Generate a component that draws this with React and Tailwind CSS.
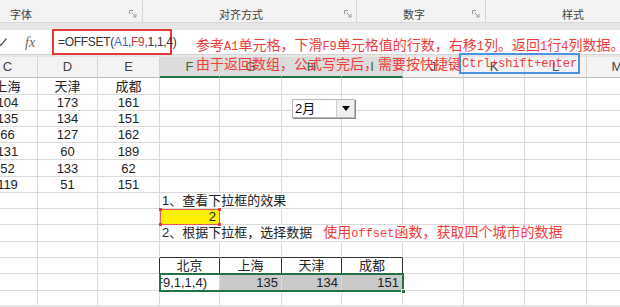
import React from "react";
import { twMerge } from "tailwind-merge";

const W = ["w-[60px]", "w-[60px]", "w-[62px]", "w-[60px]", "w-[62px]", "w-[60px]", "w-[61px]", "w-[61px]", "w-[61px]", "w-[62px]", "w-[61px]"];
const LETTERS = ["C", "D", "E", "F", "G", "H", "I", "J", "K", "L", "M"];
const SEL = [3, 4, 5, 6];
const ALL = [0, 1, 2, 3, 4, 5, 6, 7, 8, 9, 10];

function Cell({ i, className, children }) {
  return (
    <div
      className={twMerge(
        "shrink-0 flex items-end justify-center leading-[14px] border-r border-b border-[#dadada]",
        W[i],
        className
      )}
    >
      {children}
    </div>
  );
}

function M({ children }) {
  return <span className="font-['Liberation_Mono',monospace] text-[12px]">{children}</span>;
}

function Launcher() {
  return (
    <svg width="8" height="8" viewBox="0 0 8 8" className="shrink-0">
      <path d="M0.5 4V0.5H4" stroke="#9a9a9a" strokeWidth="1" fill="none" />
      <path d="M2.5 2.5L7 7M7 4v3H4" stroke="#9a9a9a" strokeWidth="1" fill="none" />
    </svg>
  );
}

const DATA = [
  ["上海", "天津", "成都"],
  ["104", "173", "161"],
  ["135", "134", "151"],
  ["66", "127", "162"],
  ["131", "60", "189"],
  ["52", "133", "62"],
  ["119", "51", "151"],
];
const DATA_H = ["h-[17px]", "h-[16px]", "h-[16px]", "h-[16px]", "h-[17px]", "h-[17px]", "h-[16px]"];

export default function App() {
  return (
    <div className="w-[620px] h-[307px] overflow-hidden relative bg-white text-[13px] text-[#222] font-['Liberation_Sans','Noto_Sans_CJK_SC',sans-serif]">
      {/* Ribbon group labels */}
      <div className="flex h-[22px] bg-[#f3f3f3] text-[11px] leading-[14px] text-[#444] font-['Noto_Sans_CJK_SC',sans-serif]">
        <div className="w-[143px] shrink-0 flex items-end pb-[1px] pl-[10px] pr-[5px] border-r border-[#d6d6d6]">
          <span className="flex-1">字体</span>
          <span className="mb-[3px]"><Launcher /></span>
        </div>
        <div className="w-[214px] shrink-0 flex items-end pb-[1px] pl-[76px] pr-[4px] border-r border-[#d6d6d6]">
          <span className="flex-1">对齐方式</span>
          <span className="mb-[3px]"><Launcher /></span>
        </div>
        <div className="w-[129px] shrink-0 flex items-end pb-[1px] pl-[46px] pr-[5px] border-r border-[#d6d6d6]">
          <span className="flex-1">数字</span>
          <span className="mb-[3px]"><Launcher /></span>
        </div>
        <div className="flex-1 flex items-end pb-[1px] pl-[76px]">
          <span>样式</span>
        </div>
      </div>
      <div className="h-[8px] bg-[#e6e6e6] border-t border-[#d9d9d9]" />

      {/* Formula bar */}
      <div className="flex h-[25px] bg-white border-b border-[#d4d4d4] items-center">
        <div className="w-[50px] shrink-0 flex items-center h-full">
          <svg width="10" height="10" viewBox="0 0 10 10" className="-ml-[3px]">
            <path d="M1 5.5L3.8 8.3L9.5 1.5" stroke="#555" strokeWidth="1.3" fill="none" />
          </svg>
          <span className="ml-[18px] font-['Liberation_Serif',serif] italic text-[14px] text-[#666]">fx</span>
        </div>
        <div className="ml-[2px] w-[120px] h-[26px] shrink-0 border-2 border-[#e5393b] flex items-center pl-[4px] text-[12px] tracking-[-0.3px] text-[#333]">
          <span>
            =OFFSET(<span className="text-[#3b6fc9]">A1</span>,<span className="text-[#d0393b]">F9</span>,1,1,4)
          </span>
          <span className="w-px h-[15px] bg-black ml-[1px]" />
        </div>
      </div>
      <div className="h-[2px] bg-[#e6e6e6]" />

      {/* Grid */}
      <div className="-ml-[22px]">
        <div className="flex h-[21px]">
          {LETTERS.map((l, i) => (
            <div
              key={l}
              className={twMerge(
                "shrink-0 flex items-end justify-center pb-[1px] border-r border-b border-r-[#d4d4d4] border-b-[#bdbdbd] bg-[#f3f3f3] text-[#444] text-[13px]",
                W[i],
                SEL.includes(i) && "bg-[#dcdcdc] text-[#2e6a44] border-b-2 border-b-[#217346] pb-0"
              )}
            >
              {l}
            </div>
          ))}
        </div>

        {DATA.map((row, r) => (
          <div key={r} className={`flex ${DATA_H[r]}`}>
            {ALL.map((i) => (
              <Cell key={i} i={i}>
                {row[i] ?? ""}
              </Cell>
            ))}
          </div>
        ))}

        {/* 1、查看下拉框的效果 */}
        <div className="flex h-[16px]">
          {ALL.map((i) =>
            i === 3 ? (
              <Cell key={i} i={i} className="justify-start pl-[2px] border-r-transparent">
                <span className="whitespace-nowrap">1、查看下拉框的效果</span>
              </Cell>
            ) : (
              <Cell key={i} i={i} className={i === 4 ? "border-r-transparent" : ""} />
            )
          )}
        </div>

        {/* yellow cell */}
        <div className="flex h-[16px]">
          {ALL.map((i) =>
            i === 3 ? (
              <Cell key={i} i={i} className="relative bg-[#ffef00] justify-end pr-[3px] border border-[#e05a5a] border-t-[#e05a5a]">
                <span>2</span>
                <span className="absolute -left-[2px] -top-[2px] w-[3px] h-[3px] bg-[#e03a3a]" />
                <span className="absolute -right-[2px] -top-[2px] w-[3px] h-[3px] bg-[#e03a3a]" />
                <span className="absolute -left-[2px] -bottom-[2px] w-[3px] h-[3px] bg-[#e03a3a]" />
                <span className="absolute -right-[2px] -bottom-[2px] w-[3px] h-[3px] bg-[#e03a3a]" />
              </Cell>
            ) : (
              <Cell key={i} i={i} />
            )
          )}
        </div>

        {/* 2、根据下拉框 */}
        <div className="flex h-[17px]">
          {ALL.map((i) =>
            i === 3 ? (
              <Cell key={i} i={i} className="justify-start pl-[2px] border-r-transparent">
                <span className="whitespace-nowrap">
                  2、根据下拉框，选择数据
                  <span className="ml-[11px] text-[14px] text-[#f23b3b] font-['Noto_Sans_CJK_SC',sans-serif]">
                    使用<M>offset</M>函数，获取四个城市的数据
                  </span>
                </span>
              </Cell>
            ) : (
              <Cell key={i} i={i} className={i > 3 && i < 9 ? "border-r-transparent" : ""} />
            )
          )}
        </div>

        {/* empty row above table */}
        <div className="flex h-[16px]">
          {ALL.map((i) => (
            <Cell key={i} i={i} className={SEL.includes(i) ? "border-b-[#333]" : ""} />
          ))}
        </div>

        {/* table header */}
        <div className="flex h-[16px]">
          {ALL.map((i) => (
            <Cell
              key={i}
              i={i}
              className={i === 2 ? "border-r-[#333]" : SEL.includes(i) ? "border-r-[#333] border-b-[#333]" : ""}
            >
              {["", "", "", "北京", "上海", "天津", "成都"][i] ?? ""}
            </Cell>
          ))}
        </div>

        {/* result row */}
        <div className="flex h-[17px]">
          {[0, 1, 2].map((i) => (
            <Cell key={i} i={i} />
          ))}
          <div className="flex relative outline-2 outline-[#217346] -outline-offset-1">
            <Cell i={3} className="justify-start overflow-hidden">
              <span className="whitespace-nowrap -ml-[5px]">F9,1,1,4)</span>
            </Cell>
            <Cell i={4} className="bg-[#c9c9c9] justify-end pr-[3px]">135</Cell>
            <Cell i={5} className="bg-[#c9c9c9] justify-end pr-[3px]">134</Cell>
            <Cell i={6} className="bg-[#c9c9c9] justify-end pr-[3px]">151</Cell>
            <span className="absolute -right-[3px] -bottom-[3px] w-[5px] h-[5px] bg-[#217346] border border-white" />
          </div>
          {[7, 8, 9, 10].map((i) => (
            <Cell key={i} i={i} />
          ))}
        </div>

        {/* last row */}
        <div className="flex h-[14px]">
          {ALL.map((i) => (
            <Cell key={i} i={i} className="border-b-0" />
          ))}
        </div>
        <div className="h-[2px] bg-[#e6e6e6]" />
      </div>

      {/* Annotation text boxes */}
      <div className="absolute left-[196px] top-[35px] text-[14px] leading-[19px] text-[#f23b3b] font-['Noto_Sans_CJK_SC',sans-serif] whitespace-nowrap">
        <div className="h-[19px]">
          参考<M>A1</M>单元格，下滑<M>F9</M>单元格值的行数，右移<M>1</M>列。返回<M>1</M>行<M>4</M>列数据。
        </div>
        <div className="h-[19px] flex items-center">
          <span className="-mr-[3px]">由于返回数组，公式写完后，需要按快捷键</span>
          <span className="h-[21px] border-2 border-[#4b93dc] flex items-center pt-[2px] px-[1px] leading-[15px] font-['Liberation_Mono',monospace] text-[12px]">
            Ctrl+shift+enter
          </span>
        </div>
      </div>

      {/* Combo box control */}
      <div className="absolute left-[292px] top-[99px] w-[63px] h-[19px] bg-white border border-[#b8b8b8] shadow-[1px_1px_0_#8a8a8a] flex">
        <div className="flex-1 flex items-center pl-[2px] text-[13px] text-[#111]">2月</div>
        <div className="w-[18px] bg-[#f0f0f0] border-l border-[#cfcfcf] flex items-center justify-center">
          <svg width="8" height="5" viewBox="0 0 8 5">
            <path d="M0 0H8L4 5Z" fill="#000" />
          </svg>
        </div>
      </div>
    </div>
  );
}
